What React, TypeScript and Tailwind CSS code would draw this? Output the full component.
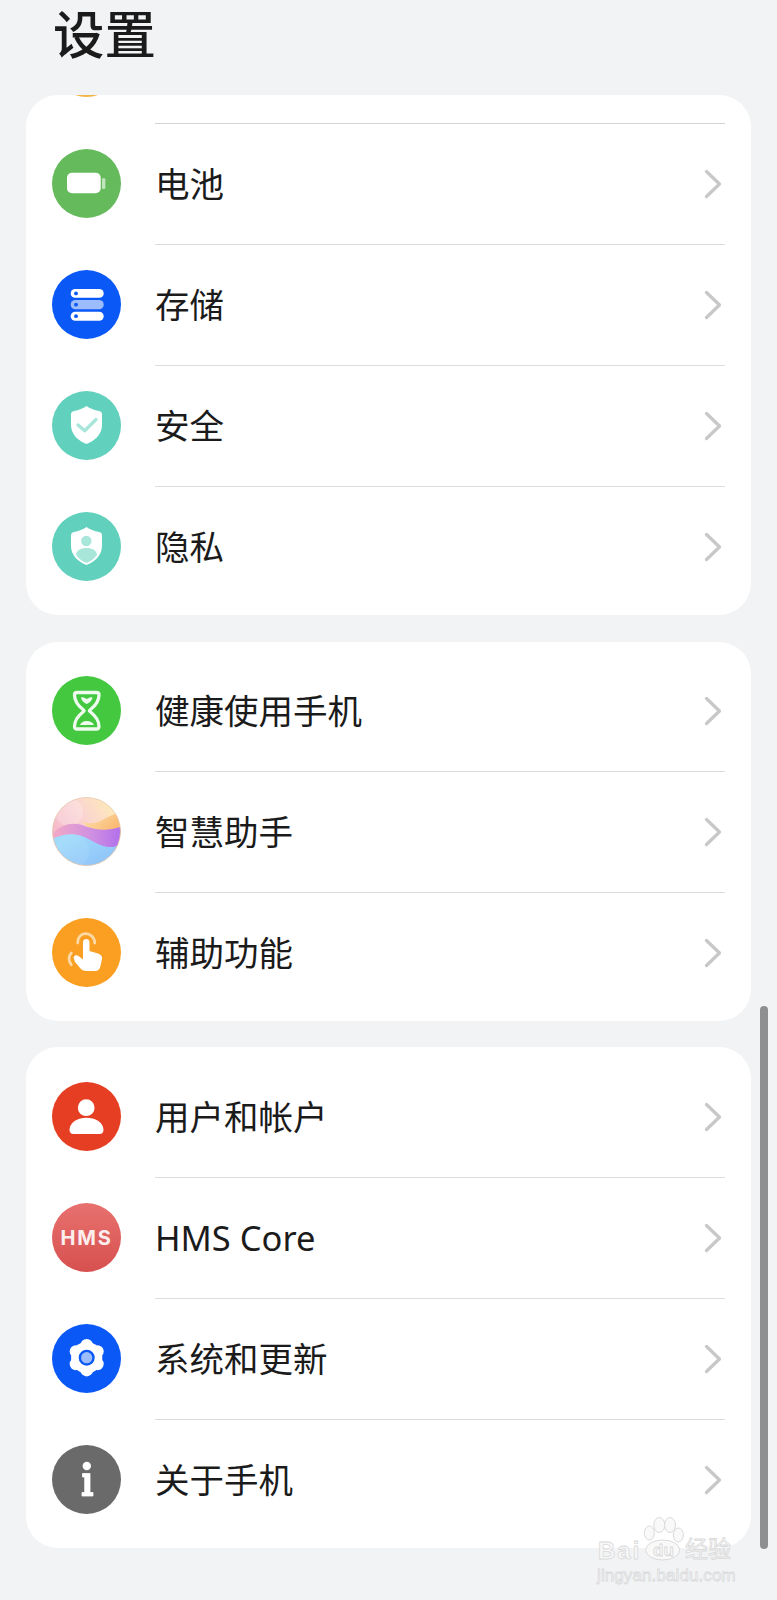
import React from "react";

const F = "font-['Noto_Sans','Noto_Sans_CJK_SC',sans-serif]";

function Chevron() {
  return (
    <svg width="18" height="30" viewBox="0 0 18 30" className="mb-[1px] shrink-0" fill="none">
      <path d="M2.5 2.5 L15.5 15 L2.5 27.5" stroke="#c8c8c8" strokeWidth="3.3" strokeLinecap="round" strokeLinejoin="round" />
    </svg>
  );
}

function Battery() {
  return (
    <svg viewBox="0 0 69 69" className="h-[69px] w-[69px]">
      <circle cx="34.5" cy="34.5" r="34.5" fill="#65ba5c" />
      <rect x="15" y="23.7" width="33.7" height="20.6" rx="5" fill="#fff" />
      <rect x="50" y="29" width="3.4" height="11" rx="1.5" fill="#fff" opacity=".6" />
    </svg>
  );
}
function Storage() {
  return (
    <svg viewBox="0 0 69 69" className="h-[69px] w-[69px]">
      <circle cx="34.5" cy="34.5" r="34.5" fill="#0a59f7" />
      <rect x="18.7" y="19" width="33" height="8.8" rx="4.4" fill="#fff" />
      <rect x="18.7" y="30" width="33" height="9.3" rx="4.6" fill="#9dbcfb" />
      <rect x="18.7" y="41.7" width="33" height="9" rx="4.5" fill="#fff" />
      <circle cx="24" cy="23.4" r="1.9" fill="#0a59f7" />
      <circle cx="24" cy="34.7" r="1.9" fill="#0a59f7" />
      <circle cx="24" cy="46.2" r="1.9" fill="#0a59f7" />
    </svg>
  );
}
const shield = "M34.5 15 C38 17.5 42 19 47 20 C49 20.3 50 21.5 50 23.5 V34 C50 44 42 50 34.5 53 C27 50 19 44 19 34 V23.5 C19 21.5 20 20.3 22 20 C27 19 31 17.5 34.5 15 Z";
function Security() {
  return (
    <svg viewBox="0 0 69 69" className="h-[69px] w-[69px]">
      <circle cx="34.5" cy="34.5" r="34.5" fill="#61d0bd" />
      <path d={shield} fill="#fff" />
      <path d="M26 34 L32.7 39.7 L44 28.5" fill="none" stroke="#a9e6da" strokeWidth="3.4" strokeLinecap="round" strokeLinejoin="round" />
    </svg>
  );
}
function Privacy() {
  return (
    <svg viewBox="0 0 69 69" className="h-[69px] w-[69px]">
      <circle cx="34.5" cy="34.5" r="34.5" fill="#61d0bd" />
      <path d={shield} fill="#fff" />
      <circle cx="34.3" cy="29" r="5.2" fill="#a9e6da" />
      <path d="M24 43 C24 38.5 29 36 34.5 36 C40 36 45 38.5 45 43 C42 47 38.5 49.5 34.5 51 C30.5 49.5 27 47 24 43 Z" fill="#a9e6da" />
    </svg>
  );
}
function Hourglass() {
  return (
    <svg viewBox="0 0 69 69" className="h-[69px] w-[69px]">
      <circle cx="34.5" cy="34.5" r="34.5" fill="#43c840" />
      <path d="M25 16.5 H44.5 C46 16.5 47 17.5 47 19 C47 25 43 30 38.5 33.5 C37 34.5 37 35 38.5 36 C43 39.5 47 45 47 50.5 C47 52 46 53 44.5 53 H25 C23.5 53 22.5 52 22.5 50.5 C22.5 45 26.5 39.5 31 36 C32.5 35 32.5 34.5 31 33.5 C26.5 30 22.5 25 22.5 19 C22.5 17.5 23.5 16.5 25 16.5 Z" fill="none" stroke="#eefbee" strokeWidth="3.3" strokeLinejoin="round" />
      <path d="M29 21.5 C31.5 20.5 33 22 34.7 23 C36.5 22 38 20.5 40.5 21.5 C40 24.5 37.5 27 34.7 28 C32 27 29.5 24.5 29 21.5 Z" fill="#eefbee" />
      <path d="M28 49 C29 46.5 31.5 45 34.7 45 C38 45 41 46.5 42 49 Z" fill="#eefbee" />
    </svg>
  );
}
function Assistant() {
  return (
    <svg viewBox="0 0 69 69" className="h-[69px] w-[69px]">
      <defs>
        <clipPath id="orb"><circle cx="34.5" cy="34.5" r="34" /></clipPath>
        <linearGradient id="orbTop" x1="0" y1="0.6" x2="0.9" y2="0">
          <stop offset="0" stopColor="#f5b4c8" />
          <stop offset=".5" stopColor="#fad3d2" />
          <stop offset="1" stopColor="#feeeb4" />
        </linearGradient>
        <linearGradient id="orbGold" x1="0" y1="0" x2="1" y2="0.6">
          <stop offset="0" stopColor="#fde3b2" />
          <stop offset="1" stopColor="#f9b46a" />
        </linearGradient>
        <linearGradient id="orbPurple" x1="0" y1="0" x2="1" y2="0">
          <stop offset="0" stopColor="#f3a9c4" />
          <stop offset=".55" stopColor="#cf90e2" />
          <stop offset="1" stopColor="#ae6cec" />
        </linearGradient>
        <linearGradient id="orbBlue" x1="0" y1="0" x2="1" y2="1">
          <stop offset="0" stopColor="#a2dffb" />
          <stop offset="1" stopColor="#8bbdf8" />
        </linearGradient>
      </defs>
      <g clipPath="url(#orb)">
        <rect width="69" height="69" fill="url(#orbTop)" />
        <circle cx="17" cy="15" r="14" fill="#fff" opacity=".22" />
        <path d="M30 24 C38 28 46 26 52 22 C58 19 64 16 72 15 V40 H48 C42 36 34 30 30 24 Z" fill="url(#orbGold)" />
        <path d="M0 37 C10 27 20 25 30 28 C40 32 50 34 60 32 C64 31 68 30 72 29 V56 H0 Z" fill="url(#orbPurple)" />
        <path d="M0 42 C10 37 20 36 30 39 C40 43 48 50 58 50 C63 50 68 48 72 46 V72 H0 Z" fill="url(#orbBlue)" />
        <circle cx="20" cy="54" r="17" fill="#fff" opacity=".08" />
      </g>
      <circle cx="34.5" cy="34.5" r="34" fill="none" stroke="#e4c6a8" strokeWidth=".8" />
    </svg>
  );
}
function Accessibility() {
  return (
    <svg viewBox="0 0 69 69" className="h-[69px] w-[69px]">
      <circle cx="34.5" cy="34.5" r="34.5" fill="#fa9f22" />
      <path d="M25.7 25 C25.7 19 29 15.7 33.5 15.7 C38.5 15.7 42.7 19.5 42.7 25" fill="none" stroke="#fdd9a5" strokeWidth="2.8" strokeLinecap="round" />
      <path d="M19.3 35 C16.5 38 16 43 19.3 46.7" fill="none" stroke="#fdd9a5" strokeWidth="2.8" strokeLinecap="round" />
      <path d="M31 24 C31 20 37.5 20 37.5 24 V33 L46 35.5 C49 36.5 50.5 38.5 50 41 L48.5 48 C48 51 46 53 43 53 H34 C31.5 53 30 52 28.5 50.5 L23 44 L22 41 C20.5 38.5 24 36 26.5 38 L31 41.5 Z" fill="#fff" />
    </svg>
  );
}
function User() {
  return (
    <svg viewBox="0 0 69 69" className="h-[69px] w-[69px]">
      <circle cx="34.5" cy="34.5" r="34.5" fill="#e63e22" />
      <circle cx="34.2" cy="25.7" r="8.4" fill="#fff" />
      <path d="M17.5 47.5 C18 40 26 35.8 34.5 35.8 C43 35.8 51 40 51.5 47.5 C51.5 50.5 50 52 47.5 52 H21.5 C19 52 17.5 50.5 17.5 47.5 Z" fill="#fff" />
    </svg>
  );
}
function Gear() {
  const lobes = [
    [34.7, 21.2],
    [45.5, 27.4],
    [45.5, 40],
    [34.7, 46.2],
    [23.9, 40],
    [23.9, 27.4],
  ];
  return (
    <svg viewBox="0 0 69 69" className="h-[69px] w-[69px]">
      <circle cx="34.5" cy="34.5" r="34.5" fill="#0a59f7" />
      {lobes.map(([x, y]) => (
        <circle key={`${x}-${y}`} cx={x} cy={y} r="6.2" fill="#fff" />
      ))}
      <circle cx="34.7" cy="33.7" r="15.6" fill="#fff" />
      <circle cx="34.7" cy="33.7" r="8" fill="#0a59f7" />
      <circle cx="34.7" cy="33.7" r="5.6" fill="#9dbcfb" />
    </svg>
  );
}
function Info() {
  return (
    <svg viewBox="0 0 69 69" className="h-[69px] w-[69px]">
      <circle cx="34.5" cy="34.5" r="34.5" fill="#6a6a6a" />
      <circle cx="34.8" cy="21" r="4.2" fill="#fff" />
      <path d="M30.5 28.5 H38 V47.5 H41 V51 H30 V47.5 H32.7 V32 H30.5 Z" fill="#fff" strokeLinejoin="round" stroke="#fff" strokeWidth=".8" />
    </svg>
  );
}
function Hms() {
  return (
    <div className="flex h-[69px] w-[69px] items-center justify-center rounded-full bg-gradient-to-b from-[#e8716f] to-[#d6504f]">
      <span className="font-['Inter',sans-serif] text-[20px] font-bold leading-none tracking-[1.8px] text-[#fdeeee]">HMS</span>
    </div>
  );
}

function Row({ icon, label, last }: { icon: React.ReactNode; label: string; last?: boolean }) {
  return (
    <div className="flex h-[121px] items-center pl-[26px]">
      <div className="mb-[2px] h-[69px] w-[69px] shrink-0">{icon}</div>
      <div className={`ml-[34px] mr-[26px] flex h-full flex-1 items-center justify-between pr-[3px] ${last ? "" : "border-b border-[#dcdcdc]"}`}>
        <span className={`text-[34.5px] leading-none text-[#1b1b1b] ${F}`}>{label}</span>
        <Chevron />
      </div>
    </div>
  );
}

function Card({ className, children }: { className: string; children: React.ReactNode }) {
  return <div className={`mx-[26px] w-[725px] overflow-hidden rounded-[32px] bg-white ${className}`}>{children}</div>;
}

const wmText = "font-['Liberation_Sans','Noto_Sans_CJK_SC',sans-serif] text-[#f8f8f8] [-webkit-text-stroke:0.8px_#dadada]";

export default function App() {
  return (
    <div className={`relative h-[1600px] w-[777px] overflow-hidden bg-[#f1f3f5] ${F}`}>
      <h1 className="h-[95px] pl-[53px] pt-[9px] text-[51.5px] font-medium leading-[50px] text-[#1b1b1b]">设置</h1>

      <Card className="pb-[7px]">
        <div className="h-[28px] overflow-hidden pl-[26px]">
          <div className="-mt-[67px] h-[69px] w-[69px] rounded-full bg-[#f3b446]" />
        </div>
        <div className="ml-[129px] mr-[26px] border-b border-[#d4d4d4]" />
        <Row icon={<Battery />} label="电池" />
        <Row icon={<Storage />} label="存储" />
        <Row icon={<Security />} label="安全" />
        <Row icon={<Privacy />} label="隐私" last />
      </Card>

      <Card className="mt-[27px] pb-[7px] pt-[9px]">
        <Row icon={<Hourglass />} label="健康使用手机" />
        <Row icon={<Assistant />} label="智慧助手" />
        <Row icon={<Accessibility />} label="辅助功能" last />
      </Card>

      <Card className="mt-[26px] pb-[7px] pt-[10px]">
        <Row icon={<User />} label="用户和帐户" />
        <Row icon={<Hms />} label="HMS Core" />
        <Row icon={<Gear />} label="系统和更新" />
        <Row icon={<Info />} label="关于手机" last />
      </Card>

      <div className="absolute left-[760px] top-[1006px] h-[543px] w-[8px] rounded-full bg-[#8e8f91]" />

      <div className="absolute left-[596px] top-[1512px] h-[76px] w-[142px]">
        <svg viewBox="0 0 50 52" className="absolute left-[44px] top-0 h-[52px] w-[50px]" fill="#f9f9f9" stroke="#dadada" strokeWidth="1">
          <ellipse cx="9.3" cy="21" rx="5" ry="7" />
          <ellipse cx="19.3" cy="13" rx="5.5" ry="7.5" />
          <ellipse cx="30" cy="13" rx="5.5" ry="7.5" />
          <ellipse cx="38.3" cy="23" rx="5" ry="7" />
          <ellipse cx="22.7" cy="38" rx="17" ry="10" />
        </svg>
        <span className={`absolute left-[2px] top-[27px] text-[24px] font-bold leading-none tracking-[2px] ${wmText}`}>Bai</span>
        <span className={`absolute left-[57px] top-[30px] text-[17px] font-bold leading-none ${wmText}`}>du</span>
        <span className={`absolute left-[89px] top-[26px] text-[23px] leading-none ${wmText}`}>经验</span>
        <span className={`absolute left-[1px] top-[55px] text-[17px] leading-none tracking-[0.1px] ${wmText}`}>jingyan.baidu.com</span>
      </div>
    </div>
  );
}
